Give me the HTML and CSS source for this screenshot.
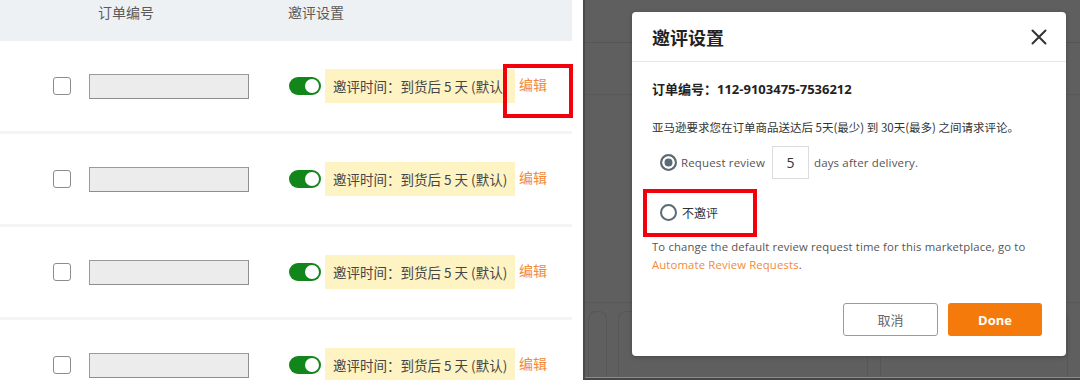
FILE: index.html
```html
<!DOCTYPE html>
<html lang="zh">
<head>
<meta charset="utf-8">
<link rel="stylesheet" href="styles.css">
</head>
<body>
<div class="screen">
  <section class="orders">
    <div class="table">
      <div class="thead">
        <div class="th th-id">订单编号</div>
        <div class="th th-set">邀评设置</div>
      </div>
      <div class="row">
        <span class="cb"></span><span class="idbox"></span>
        <span class="toggle"><span class="knob"></span></span>
        <span class="tag">邀评时间：到货后 5 天 (默认)</span><a class="edit">编辑</a>
      </div>
      <div class="row">
        <span class="cb"></span><span class="idbox"></span>
        <span class="toggle"><span class="knob"></span></span>
        <span class="tag">邀评时间：到货后 5 天 (默认)</span><a class="edit">编辑</a>
      </div>
      <div class="row">
        <span class="cb"></span><span class="idbox"></span>
        <span class="toggle"><span class="knob"></span></span>
        <span class="tag">邀评时间：到货后 5 天 (默认)</span><a class="edit">编辑</a>
      </div>
      <div class="row">
        <span class="cb"></span><span class="idbox"></span>
        <span class="toggle"><span class="knob"></span></span>
        <span class="tag">邀评时间：到货后 5 天 (默认)</span><a class="edit">编辑</a>
      </div>
    </div>
    <div class="mark mark-edit"></div>
  </section>

  <section class="overlay">
    <div class="backdrop">
      <div class="bd-top"></div>
      <div class="bd-row"></div>
      <div class="bd-mid"></div>
      <div class="bd-cards">
        <div class="bd-card c1"></div>
        <div class="bd-card c2"></div>
        <div class="bd-card c3"></div>
      </div>
      <div class="bd-bottom"></div>
    </div>

    <div class="modal">
      <div class="m-head">
        <h2 class="m-title">邀评设置</h2>
        <svg class="m-close" width="16" height="16" viewBox="0 0 16 16"><path d="M1.5 1.5 L14.5 14.5 M14.5 1.5 L1.5 14.5" stroke="#333" stroke-width="2" stroke-linecap="round" fill="none"/></svg>
      </div>
      <div class="m-body">
        <p class="m-order">订单编号：112-9103475-7536212</p>
        <p class="m-desc">亚马逊要求您在订单商品送达后 5天(最少) 到 30天(最多) 之间请求评论。</p>
        <div class="opt opt-days">
          <span class="radio checked"></span>
          <span class="opt-text">Request review</span>
          <span class="days-input">5</span>
          <span class="opt-text">days after delivery.</span>
        </div>
        <div class="opt opt-none">
          <span class="radio"></span>
          <span class="opt-text cjk">不邀评</span>
        </div>
        <p class="m-note">To change the default review request time for this marketplace, go to <a class="m-link">Automate Review Requests</a>.</p>
      </div>
      <div class="m-foot">
        <button class="btn btn-cancel">取消</button>
        <button class="btn btn-done">Done</button>
      </div>
      <div class="mark mark-opt"></div>
    </div>
  </section>
</div>
</body>
</html>
```

FILE: styles.css
```css
* { box-sizing: border-box; margin: 0; padding: 0; }
html, body { width: 1080px; height: 380px; overflow: hidden; background: #fff; }
body { font-family: "Noto Sans CJK SC", "Noto Sans", sans-serif; }

.screen { display: flex; width: 1080px; height: 380px; }

/* ---------- left: orders table ---------- */
.orders { position: relative; width: 583px; height: 380px; background: #fff; overflow: hidden; }
.table { width: 572px; }
.thead { display: flex; height: 41px; background: #eef1f3; padding-top: 2px; }
.th { font-size: 14px; line-height: 20px; color: #5a5a5a; }
.th-id { margin-left: 98px; }
.th-set { margin-left: 134px; }

.row { display: flex; align-items: center; height: 93px; padding-left: 53px; border-bottom: 3px solid #f3f5f5; }
.cb { width: 18px; height: 18px; border: 1.5px solid #8c8c8c; border-radius: 3px; background: #fff; }
.idbox { width: 160px; height: 25px; margin-left: 18px; background: #ececec; border: 1.5px solid #8e8e8e; border-top-color: #9a9a9a; border-left-color: #9a9a9a; }
.toggle { display: flex; justify-content: flex-end; align-items: center; width: 32px; height: 18px; margin-left: 40px; padding: 0 2px; border-radius: 9px; background: #12861a; }
.knob { width: 14px; height: 14px; border-radius: 50%; background: #fff; }
.tag { display: flex; align-items: center; width: 190px; height: 34px; margin-left: 4px; padding-left: 8px; background: #fdf3c3; color: #454545; font-size: 13.5px; white-space: nowrap; overflow: hidden; }
.edit { margin-left: 4px; margin-top: -4px; color: #f28a3a; font-size: 14px; }

.mark { position: absolute; border: 4px solid #f2000c; }
.mark-edit { left: 503px; top: 64px; width: 70px; height: 54px; }

/* ---------- right: dialog over dimmed page ---------- */
.overlay { position: relative; flex: 1; height: 380px; background: #5f5f5f; border-left: 2px solid #4a4a4a; }
.backdrop { display: flex; flex-direction: column; height: 380px; }
.bd-top { height: 43px; border-bottom: 1px solid #555; }
.bd-row { height: 52px; border-bottom: 1px solid #585858; }
.bd-mid { flex: 1; border-bottom: 1px solid #585858; }
.bd-cards { display: flex; height: 74px; padding: 8px 0 0 3px; gap: 11px; }
.bd-card { border: 1px solid #575757; border-bottom: none; border-radius: 8px 8px 0 0; }
.c1 { width: 19px; }
.c2 { width: 250px; }
.c3 { width: 188px; margin-left: 1px; }
.bd-bottom { height: 3px; border-top: 1px solid #8a8a8a; background: #474747; }

.modal { position: absolute; left: 47px; top: 12px; width: 434px; height: 344px; background: #fff; border-radius: 4px; box-shadow: 0 1px 4px rgba(0,0,0,.25); display: flex; flex-direction: column; }
.m-head { display: flex; align-items: center; justify-content: space-between; height: 50px; padding: 0 19px 0 20px; border-bottom: 1px solid #e5e8ea; }
.m-title { font-size: 18px; font-weight: 700; color: #222; line-height: 24px; }
.m-close { display: block; }

.m-body { padding: 0 20px; font-family: "Open Sans", "Noto Sans CJK SC", sans-serif; }
.m-order { margin-top: 17px; font-size: 13px; line-height: 20px; font-weight: 700; color: #222; }
.m-desc { margin-top: 19px; font-size: 11.5px; line-height: 18px; color: #333; white-space: nowrap; font-family: "Noto Sans CJK SC", sans-serif; }
.opt { display: flex; align-items: center; padding-left: 8px; }
.opt-days { margin-top: 10px; height: 33px; }
.opt-none { margin-top: 23px; height: 20px; }
.radio { width: 17px; height: 17px; border-radius: 50%; border: 2px solid #5b6a73; background: #fff; flex: none; }
.radio.checked { background: #5b6a73; box-shadow: inset 0 0 0 2.5px #fff; }
.opt-text { margin-left: 4px; font-size: 11.5px; color: #555; letter-spacing: .15px; }
.opt-text.cjk { letter-spacing: 0; color: #333; font-size: 12px; font-family: "Noto Sans CJK SC", sans-serif; margin-left: 5px; }
.days-input { display: flex; align-items: center; justify-content: center; width: 37px; height: 33px; margin: 0 1px 0 7px; border: 1px solid #dcdcdc; font-size: 14px; color: #333; }
.m-note { margin-top: 16px; font-size: 11.3px; line-height: 18px; color: #555; letter-spacing: .15px; }
.m-link { color: #f28a3a; }

.m-foot { display: flex; justify-content: flex-end; gap: 10px; margin-top: 29px; padding-right: 24px; }
.btn { width: 95px; height: 33px; border-radius: 3px; font-size: 13px; font-family: "Open Sans", "Noto Sans CJK SC", sans-serif; }
.btn-cancel { background: #fff; border: 1px solid #9a9a9a; color: #666; font-family: "Noto Sans CJK SC", sans-serif; }
.btn-done { background: #f47b0b; border: none; color: #fff; font-weight: 700; width: 94px; }

.mark-opt { left: 11px; top: 177px; width: 114px; height: 48px; }
```
